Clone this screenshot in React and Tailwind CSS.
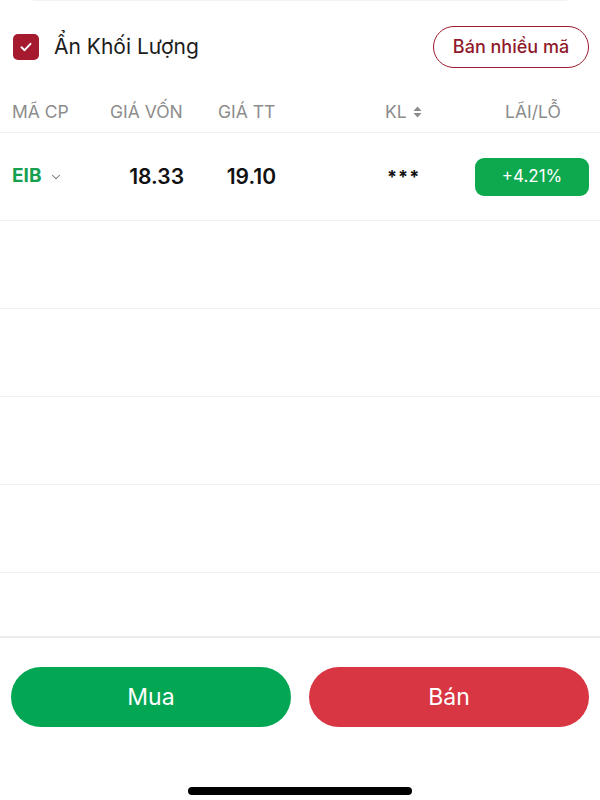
import { ChevronDown } from "lucide-react";

const font = { fontFamily: "Inter, 'Noto Sans', sans-serif" };

function SortIcon() {
  return (
    <svg width="9" height="12" viewBox="0 0 9 12" className="ml-[6px]">
      <path d="M4.5 0.5 L8.5 5 H0.5 Z" fill="#8c8c8c" />
      <path d="M4.5 11.5 L8.5 7 H0.5 Z" fill="#8c8c8c" />
    </svg>
  );
}

const cols = "grid grid-cols-[88px_84px_92px_192px_7px_114px] pl-[12px] pr-[11px] items-center";

export default function App() {
  return (
    <div className="w-[600px] h-[800px] bg-white flex flex-col relative overflow-hidden" style={font}>
      <div className="mx-[33px] h-px bg-[#f2f2f2]" />

      {/* toolbar */}
      <div className="h-[91px] flex items-center justify-between pl-[13px] pr-[11px]">
        <div className="flex items-center gap-[15px]">
          <div className="w-[26px] h-[26px] rounded-[5px] bg-[#a51a2f] flex items-center justify-center">
            <svg width="16" height="16" viewBox="0 0 16 16">
              <path d="M3.5 8.2 L6.6 11.2 L12.5 4.8" fill="none" stroke="white" strokeWidth="1.9" strokeLinecap="round" strokeLinejoin="round" />
            </svg>
          </div>
          <span className="text-[21px] text-[#1c1c1c]">Ẩn Khối Lượng</span>
        </div>
        <button className="h-[42px] w-[156px] rounded-full border-[1.5px] border-[#9b1d2f] text-[#8f1a2b] text-[18px] font-medium">
          Bán nhiều mã
        </button>
      </div>

      {/* header */}
      <div className={`${cols} h-[41px] border-b border-[#f1f1f1] text-[17.5px] text-[#8c8c8c]`}>
        <span>MÃ CP</span>
        <span className="pl-[10px]">GIÁ VỐN</span>
        <span className="pl-[34px]">GIÁ TT</span>
        <span className="pl-[109px] flex items-center">KL<SortIcon /></span>
        <span />
        <span className="text-center pl-[2px]">LÃI/LỖ</span>
      </div>

      {/* data row */}
      <div className={`${cols} h-[88px] border-b border-[#f1f1f1]`}>
        <span className="flex items-center gap-[8px] text-[19px] font-bold text-[#17a04f]">
          EIB
          <ChevronDown size={14} strokeWidth={1.8} className="text-[#6f6f6f]" />
        </span>
        <span className="text-right text-[21px] font-semibold text-[#111]">18.33</span>
        <span className="text-right text-[21px] font-semibold text-[#111]">19.10</span>
        <span className="pl-[111px] text-[18px] font-bold text-[#111] tracking-[1px]">***</span>
        <span />
        <div className="h-[38px] rounded-[9px] bg-[#0ea84f] flex items-center justify-center text-white text-[17px]">
          +4.21%
        </div>
      </div>

      {[0, 1, 2, 3].map((i) => (
        <div key={i} className="h-[88px] border-b border-[#f1f1f1]" />
      ))}

      <div className="h-[63px]" />

      {/* actions */}
      <div className="border-t-2 border-[#ebebeb] pt-[29px] px-[11px] flex gap-[18px]">
        <button className="flex-1 h-[60px] rounded-full bg-[#02a653] text-white text-[23px]">Mua</button>
        <button className="flex-1 h-[60px] rounded-full bg-[#d83643] text-white text-[23px]">Bán</button>
      </div>

      <div className="absolute bottom-[5px] left-[188px] w-[224px] h-[8px] rounded-full bg-black" />
    </div>
  );
}
